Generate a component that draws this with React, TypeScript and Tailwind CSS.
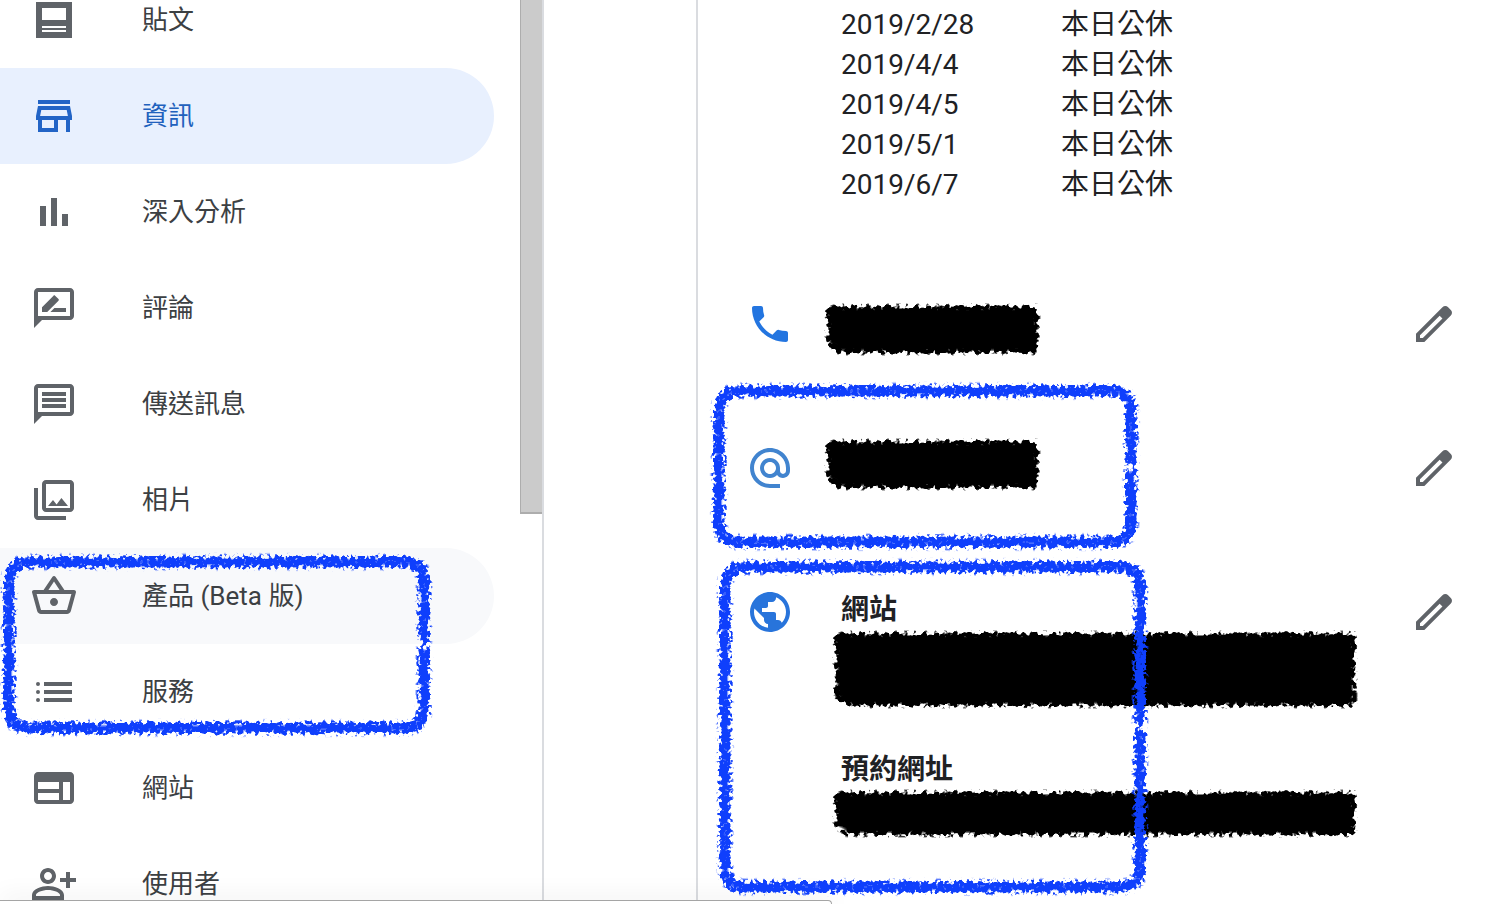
import type { ReactNode } from 'react';
import { clsx } from 'clsx';

type NavItem = {
  label: string;
  icon: string;
  active?: boolean;
  hovered?: boolean;
  marked?: boolean;
};

// 24x24 icon paths
const icons = {
  posts: 'M3 3v18h18V3H3zm3 3h12v6H6V6zm0 9h12v1H6v-1zm0 2h12v1H6v-1z',
  store:
    'M18.36 9l.6 3H5.04l.6-3h12.72M20 4H4v2h16V4zm0 3H4l-1 5v2h1v6h10v-6h4v6h2v-6h1v-2l-1-5zM6 18v-4h6v4H6z',
  insights: 'M5 9h3v10H5V9zm5.5-4h3v14h-3V5zM16 13h3v6h-3v-6z',
  reviews:
    'M20 2H4c-1.1 0-2 .9-2 2v18l4-4h14c1.1 0 2-.9 2-2V4c0-1.1-.9-2-2-2zm0 14H4V4h16v12zM6 14v-2.4l5.75-5.75c.25-.25.55-.25.8 0l1.7 1.7c.25.25.25.55 0 .8L8.6 14H6zm12 0h-7.8l2-2H18v2z',
  messages:
    'M20 2H4c-1.1 0-2 .9-2 2v18l4-4h14c1.1 0 2-.9 2-2V4c0-1.1-.9-2-2-2zm0 14H4V4h16v12zM6 6h12v2H6V6zm0 3h12v2H6V9zm0 3h12v2H6v-2z',
  photos:
    'M20 2H8c-1.1 0-2 .9-2 2v12c0 1.1.9 2 2 2h12c1.1 0 2-.9 2-2V4c0-1.1-.9-2-2-2zm0 14H8V4h12v12zM2 6v14c0 1.1.9 2 2 2h14v-2H4V6H2zm7 9l2.5-3 1.8 2.2L15.7 11l3.3 4H9z',
  products:
    'M22 9h-4.79l-4.38-6.56c-.19-.28-.51-.42-.83-.42s-.64.14-.83.43L6.79 9H2c-.55 0-1 .45-1 1 0 .09.01.18.04.27l2.54 9.27c.23.84 1 1.46 1.92 1.46h13c.92 0 1.69-.62 1.93-1.46l2.54-9.27L23 10c0-.55-.45-1-1-1zM12 4.8L14.8 9H9.2L12 4.8zM18.5 19l-12.99.01L3.31 11H20.7l-2.2 8zM12 13c-1.1 0-2 .9-2 2s.9 2 2 2 2-.9 2-2-.9-2-2-2z',
  services:
    'M7 7h14v2H7V7zm0 4h14v2H7v-2zm0 4h14v2H7v-2zM4 7a1 1 0 100 2 1 1 0 000-2zm0 4a1 1 0 100 2 1 1 0 000-2zm0 4a1 1 0 100 2 1 1 0 000-2z',
  website:
    'M20 4H4c-1.1 0-2 .9-2 2v12c0 1.1.9 2 2 2h16c1.1 0 2-.9 2-2V6c0-1.1-.9-2-2-2zm-5.5 14H4v-3.5h10.5V18zm0-5.5H4V9h10.5v3.5zM20 18h-3.5V9H20v9z',
  users:
    'M9 12c2.21 0 4-1.79 4-4s-1.79-4-4-4-4 1.79-4 4 1.79 4 4 4zm0-6c1.1 0 2 .9 2 2s-.9 2-2 2-2-.9-2-2 .9-2 2-2zm0 7c-3 0-8 1.5-8 4.5V20h16v-2.5c0-3-5-4.5-8-4.5zm6 5H3v-.5C3 16.3 6.2 15 9 15s6 1.3 6 2.5v.5zm5-9V6h-2v3h-3v2h3v3h2v-3h3V9h-3z',
  phone:
    'M6.62 10.79c1.44 2.83 3.76 5.14 6.59 6.59l2.2-2.2c.27-.27.67-.36 1.02-.24 1.12.37 2.33.57 3.57.57.55 0 1 .45 1 1V20c0 .55-.45 1-1 1-9.39 0-17-7.61-17-17 0-.55.45-1 1-1h3.5c.55 0 1 .45 1 1 0 1.25.2 2.45.57 3.57.11.35.03.74-.25 1.02l-2.2 2.2z',
  email:
    'M12 2C6.48 2 2 6.48 2 12s4.48 10 10 10h5v-2h-5c-4.34 0-8-3.66-8-8s3.66-8 8-8 8 3.66 8 8v1.43c0 .79-.71 1.57-1.5 1.57s-1.5-.78-1.5-1.57V12c0-2.76-2.24-5-5-5s-5 2.24-5 5 2.24 5 5 5c1.38 0 2.64-.56 3.54-1.47.65.89 1.77 1.47 2.96 1.47 1.97 0 3.5-1.6 3.5-3.57V12c0-5.52-4.48-10-10-10zm0 13c-1.66 0-3-1.34-3-3s1.34-3 3-3 3 1.34 3 3-1.34 3-3 3z',
  globe:
    'M12 2C6.48 2 2 6.48 2 12s4.48 10 10 10 10-4.48 10-10S17.52 2 12 2zm-1 17.93c-3.95-.49-7-3.85-7-7.93 0-.62.08-1.21.21-1.79L9 15v1c0 1.1.9 2 2 2v1.93zm6.9-2.54c-.26-.81-1-1.39-1.9-1.39h-1v-3c0-.55-.45-1-1-1H8v-2h2c.55 0 1-.45 1-1V7h2c1.1 0 2-.9 2-2v-.41c2.93 1.19 5 4.06 5 7.41 0 2.08-.8 3.97-2.1 5.39z',
  edit: 'M20.41 4.94l-1.35-1.35c-.78-.78-2.05-.78-2.83 0L3 16.82V21h4.18L20.41 7.77c.79-.78.79-2.05 0-2.83zM6.41 19.06L5 19v-1.36l9.82-9.82 1.41 1.41-9.82 9.83z',
};

const navItems: NavItem[] = [
  { label: '貼文', icon: icons.posts },
  { label: '資訊', icon: icons.store, active: true },
  { label: '深入分析', icon: icons.insights },
  { label: '評論', icon: icons.reviews },
  { label: '傳送訊息', icon: icons.messages },
  { label: '相片', icon: icons.photos },
  { label: '產品 (Beta 版)', icon: icons.products, hovered: true, marked: true },
  { label: '服務', icon: icons.services },
  { label: '網站', icon: icons.website },
  { label: '使用者', icon: icons.users },
];

const holidays = ['2019/2/28', '2019/4/4', '2019/4/5', '2019/5/1', '2019/6/7'];

function Icon({ path, className }: { path: string; className?: string }) {
  return (
    <svg viewBox="0 0 24 24" fill="currentColor" fillRule="evenodd" className={clsx('size-12 shrink-0', className)} aria-hidden="true">
      <path d={path} />
    </svg>
  );
}

// Shared noise filters for the hand-drawn marks
function BrushFilters() {
  return (
    <svg className="absolute size-0" aria-hidden="true">
      <defs>
        <filter id="brush" x="-10%" y="-10%" width="120%" height="120%" colorInterpolationFilters="sRGB">
          <feGaussianBlur in="SourceAlpha" stdDeviation="2" result="soft" />
          <feTurbulence type="fractalNoise" baseFrequency="0.25" numOctaves="3" seed="4" />
          <feColorMatrix values="0 0 0 0 0  0 0 0 0 0  0 0 0 0 0  3 0 0 0 -1" result="noise" />
          <feComposite in="soft" in2="noise" operator="arithmetic" k1="0" k2="1" k3="0.76" k4="-0.38" />
          <feComponentTransfer result="shape">
            <feFuncA type="linear" slope="4" intercept="-1.6" />
          </feComponentTransfer>
          <feFlood floodColor="#0f3ffc" />
          <feComposite in2="shape" operator="in" />
        </filter>
        <filter id="marker" x="-10%" y="-10%" width="120%" height="120%" colorInterpolationFilters="sRGB">
          <feGaussianBlur in="SourceAlpha" stdDeviation="2" result="soft" />
          <feTurbulence type="fractalNoise" baseFrequency="0.2" numOctaves="2" seed="9" />
          <feColorMatrix values="0 0 0 0 0  0 0 0 0 0  0 0 0 0 0  3 0 0 0 -1" result="noise" />
          <feComposite in="soft" in2="noise" operator="arithmetic" k1="0" k2="1" k3="0.7" k4="-0.35" />
          <feComponentTransfer result="shape">
            <feFuncA type="linear" slope="4" intercept="-1.6" />
          </feComponentTransfer>
          <feFlood floodColor="#000000" />
          <feComposite in2="shape" operator="in" />
        </filter>
      </defs>
    </svg>
  );
}

// Blue crayon frame, drawn with a small break halfway down the right side
function Frame({ width, height, className }: { width: number; height: number; className: string }) {
  const l = 6;
  const t = 6;
  const r = width - 6;
  const b = height - 6;
  const mid = height / 2;
  return (
    <svg width={width} height={height} className={clsx('absolute z-10 overflow-visible pointer-events-none', className)} aria-hidden="true">
      <path
        d={`M${r} ${mid + 2}V${b - 20}Q${r} ${b} ${r - 20} ${b}H${l + 20}Q${l} ${b} ${l} ${b - 20}V${t + 20}Q${l} ${t} ${l + 20} ${t}H${r - 20}Q${r} ${t} ${r} ${t + 20}V${mid - 2}`}
        fill="none"
        stroke="#0f3ffc"
        strokeWidth="11"
        filter="url(#brush)"
      />
    </svg>
  );
}

function Redaction({ width, height }: { width: number; height: number }) {
  return (
    <svg width={width} height={height} className="block overflow-visible" aria-hidden="true">
      <path d={`M1 1H${width - 1}V${height - 1}H12L8 ${height - 6}L1 ${height - 8}Z`} filter="url(#marker)" />
    </svg>
  );
}

function InfoRow({ icon, iconClass, label, children }: { icon: string; iconClass: string; label: string; children: ReactNode }) {
  return (
    <section className="relative flex items-start min-h-36 pl-12 pr-[34px]">
      <Icon path={icon} className={clsx('mt-12', iconClass)} />
      <div className="flex-1">{children}</div>
      <button type="button" aria-label={label} className="mt-12 text-[#5f6368]">
        <Icon path={icons.edit} />
      </button>
    </section>
  );
}

export default function App() {
  return (
    <div className="relative flex h-screen overflow-hidden bg-white font-['Roboto','Noto_Sans_CJK_TC',sans-serif]">
      <BrushFilters />

      {/* Sidebar */}
      <aside className="flex w-[544px] shrink-0 border-r-2 border-[#dadce0]">
        <nav className="-mt-7 flex-1 pr-[26px]">
          <ul>
            {navItems.map((item) => (
              <li key={item.label} className="relative">
                <a
                  href="#"
                  className={clsx(
                    'flex h-24 items-center gap-16 rounded-r-full pl-[30px] text-[26px]',
                    item.active ? 'bg-[#e8f0fe] text-[#2161bd]' : 'text-[#3c4043]',
                    item.hovered && 'bg-[#f8f9fb]'
                  )}
                >
                  <Icon path={item.icon} className={item.active ? 'text-[#2264c6]' : 'text-[#5f6368]'} />
                  <span>{item.label}</span>
                </a>
                {item.marked && <Frame width={427} height={178} className="left-[3px] top-2" />}
              </li>
            ))}
          </ul>
        </nav>
        {/* Scrollbar thumb */}
        <div className="h-[514px] w-[22px] border-b-2 border-l border-[#adadad] bg-[#cbcbcb]" />
      </aside>

      {/* Business details */}
      <main className="flex-1 pl-[152px]">
        <div className="h-full border-l-2 border-[#dadce0] pt-[5px]">
          <table className="ml-[143px] text-[28px] leading-10 text-[#202124]">
            <tbody>
              {holidays.map((date) => (
                <tr key={date}>
                  <td className="w-[220px] p-0">{date}</td>
                  <td className="p-0">本日公休</td>
                </tr>
              ))}
            </tbody>
          </table>

          <div className="mt-[47px]">
            <InfoRow icon={icons.phone} iconClass="text-[#2375e0]" label="編輯電話">
              <div className="ml-8 pt-[53px]">
                <Redaction width={213} height={49} />
              </div>
            </InfoRow>

            <InfoRow icon={icons.email} iconClass="text-[#4184cf]" label="編輯電子郵件">
              <div className="ml-8 pt-11">
                <Redaction width={213} height={49} />
              </div>
              <Frame width={424} height={163} className="left-[15px] -top-[11px]" />
            </InfoRow>

            <InfoRow icon={icons.globe} iconClass="text-[#2874db]" label="編輯網站">
              <div className="ml-10 pt-[50px] text-[28px] leading-10 text-[#202124]">
                <h2 className="mb-0.5 pl-[7px] font-bold">網站</h2>
                <Redaction width={522} height={75} />
                <h2 className="mt-[43px] mb-px pl-[7px] font-bold">預約網址</h2>
                <Redaction width={522} height={45} />
              </div>
              <Frame width={427} height={332} className="left-[21px] top-[21px]" />
            </InfoRow>
          </div>
        </div>
      </main>

      {/* Browser status bubble */}
      <div className="absolute bottom-0 left-0 h-1 w-[832px] rounded-tr-md border-t border-r border-[#a5a5a5] bg-white shadow-[0_0_24px_rgba(0,0,0,0.2)]" />
    </div>
  );
}
